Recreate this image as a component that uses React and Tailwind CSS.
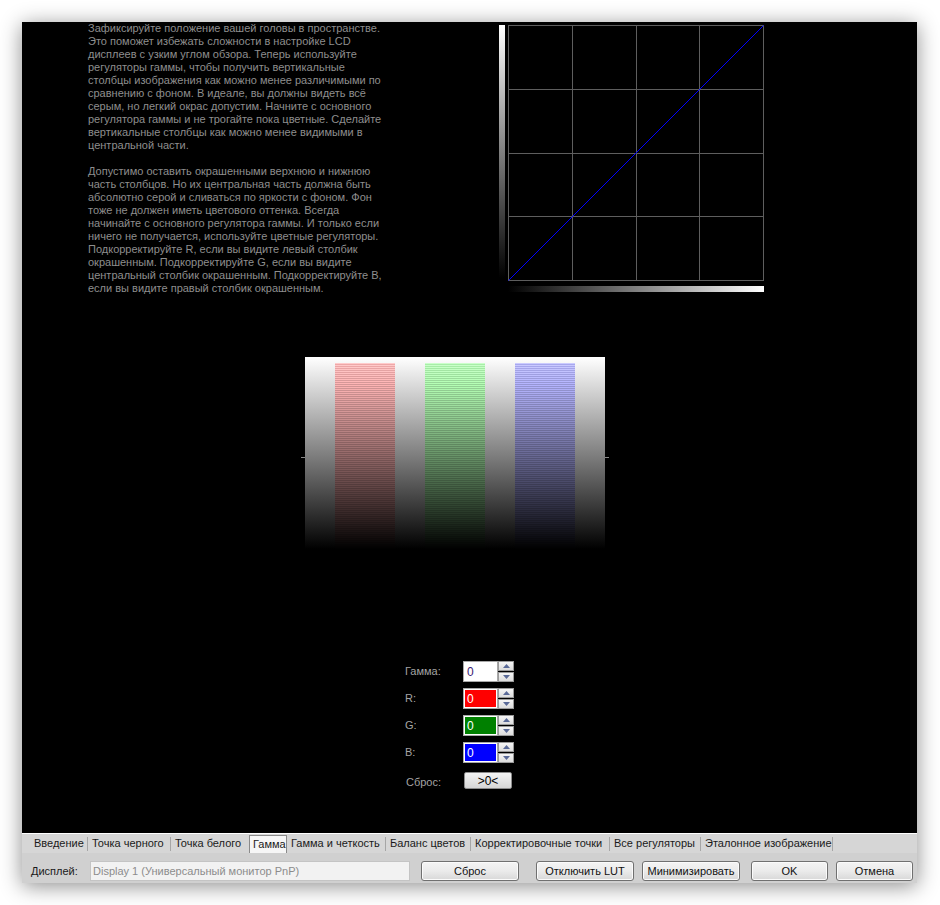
import React from "react";

const para1 = [
  "Зафиксируйте положение вашей головы в пространстве.",
  "Это поможет избежать сложности в настройке LCD",
  "дисплеев с узким углом обзора. Теперь используйте",
  "регуляторы гаммы, чтобы получить вертикальные",
  "столбцы изображения как можно менее различимыми по",
  "сравнению с фоном. В идеале, вы должны видеть всё",
  "серым, но легкий окрас допустим. Начните с основного",
  "регулятора гаммы и не трогайте пока цветные. Сделайте",
  "вертикальные столбцы как можно менее видимыми в",
  "центральной части.",
];
const para2 = [
  "Допустимо оставить окрашенными верхнюю и нижнюю",
  "часть столбцов. Но их центральная часть должна быть",
  "абсолютно серой и сливаться по яркости с фоном. Фон",
  "тоже не должен иметь цветового оттенка. Всегда",
  "начинайте с основного регулятора гаммы. И только если",
  "ничего не получается, используйте цветные регуляторы.",
  "Подкорректируйте R, если вы видите левый столбик",
  "окрашенным. Подкорректируйте G, если вы видите",
  "центральный столбик окрашенным. Подкорректируйте B,",
  "если вы видите правый столбик окрашенным.",
];

function Graph() {
  const lines = [0, 63.75, 127.5, 191.25, 255];
  return (
    <svg width="266" height="268" className="block">
      <defs>
        <linearGradient id="vbar" x1="0" y1="0" x2="0" y2="1">
          <stop offset="0" stopColor="#ffffff" />
          <stop offset="1" stopColor="#000000" />
        </linearGradient>
        <linearGradient id="hbar" x1="0" y1="0" x2="1" y2="0">
          <stop offset="0" stopColor="#000000" />
          <stop offset="1" stopColor="#ffffff" />
        </linearGradient>
      </defs>
      <rect x="0" y="0" width="6" height="253" fill="url(#vbar)" />
      <rect x="9" y="261" width="256" height="6" fill="url(#hbar)" />
      {lines.map((l, i) => (
        <line key={"v" + i} x1={9.5 + Math.round(l)} y1="0" x2={9.5 + Math.round(l)} y2="255.5" stroke="#5e5e5e" strokeWidth="1" />
      ))}
      {lines.map((l, i) => (
        <line key={"h" + i} x1="9" y1={0.5 + Math.round(l)} x2="265" y2={0.5 + Math.round(l)} stroke="#5e5e5e" strokeWidth="1" />
      ))}
      <line x1="9.5" y1="255.5" x2="264.5" y2="0.5" stroke="#0000ff" strokeWidth="1" />
    </svg>
  );
}

const clamp = (v) => Math.max(0, Math.min(255, Math.round(v)));
const gray = (y) => (y < 100 ? 255 - (131 * y) / 100 : Math.max(0, 124 * (1 - (y - 100) / 92)));

function rowColor(ch, y, odd) {
  const g = gray(y);
  const k = odd ? 1.08 : 0.9;
  const main = (g * 1.04 + 8 * (g / 255)) * k;
  const other = g * 0.76 * k;
  const c = [other, other, other];
  c[ch] = main;
  return `rgb(${clamp(c[0])},${clamp(c[1])},${clamp(c[2])})`;
}

function Column({ x, ch }) {
  const rows = [];
  for (let y = 6; y < 193; y++) {
    rows.push(<rect key={y} x={x} y={y} width="60" height="1" fill={rowColor(ch, y, y % 2 === 0)} />);
  }
  return <g shapeRendering="crispEdges">{rows}</g>;
}

function Pattern() {
  return (
    <svg width="308" height="200" className="block">
      <defs>
        <linearGradient id="bgg" x1="0" y1="0" x2="0" y2="1">
          <stop offset="0" stopColor="#ffffff" />
          <stop offset="0.5" stopColor="#7c7c7c" />
          <stop offset="0.96" stopColor="#000000" />
          <stop offset="1" stopColor="#000000" />
        </linearGradient>
      </defs>
      <rect x="4" y="0" width="300" height="200" fill="url(#bgg)" />
      <rect x="0" y="100" width="4" height="1" fill="#8a8a8a" />
      <rect x="304" y="100" width="4" height="1" fill="#8a8a8a" />
      <Column x={34} ch={0} />
      <Column x={124} ch={1} />
      <Column x={214} ch={2} />
    </svg>
  );
}

function Arrow({ up }) {
  return (
    <svg width="7" height="4" className="block">
      <polygon points={up ? "0,4 7,4 3.5,0" : "0,0 7,0 3.5,4"} fill="#5a6a98" />
    </svg>
  );
}

function Spin({ fill, textColor }) {
  return (
    <div className="flex h-[21px]">
      <div className="w-[35px] h-[21px] border border-[#a8a8a8] bg-white p-px">
        <div className={`w-full h-full ${fill} flex items-center pl-[2px] text-[12px] leading-none ${textColor}`}>0</div>
      </div>
      <div className="w-[16px] h-[21px] flex flex-col">
        <div className="h-[10px] border border-[#9a9a9a] bg-linear-to-b from-[#f6f6f6] to-[#dcdcdc] flex items-center justify-center">
          <Arrow up />
        </div>
        <div className="h-px bg-black" />
        <div className="h-[10px] border border-[#9a9a9a] bg-linear-to-b from-[#f6f6f6] to-[#dcdcdc] flex items-center justify-center">
          <Arrow />
        </div>
      </div>
    </div>
  );
}

function Btn({ w, children, ml }) {
  return (
    <div
      className={`${w} ${ml} h-[20px] border border-[#707070] rounded-[3px] bg-linear-to-b from-[#f4f4f4] via-[#ebebeb] to-[#d8d8d8] flex items-center justify-center text-[11px] text-[#111] shadow-[inset_0_0_0_1px_#fbfbfb]`}
    >
      {children}
    </div>
  );
}

const tabs = [
  { t: "Введение", w: "w-[58px]" },
  { t: "Точка черного", w: "w-[83px]" },
  { t: "Точка белого", w: "w-[78px]", nosep: true },
  { t: "Гамма", w: "w-[38px]", active: true },
  { t: "Гамма и четкость", w: "w-[99px]" },
  { t: "Баланс цветов", w: "w-[85px]" },
  { t: "Корректировочные точки", w: "w-[139px]" },
  { t: "Все регуляторы", w: "w-[91px]" },
  { t: "Эталонное изображение", w: "w-[132px]" },
];

export default function App() {
  return (
    <div className="w-[940px] h-[905px] bg-white pt-[22px] pl-[22px] font-['Liberation_Sans',sans-serif] text-[11px]">
      <div className="w-[895px] h-[861px] flex flex-col shadow-[0_3px_20px_rgba(0,0,0,0.45)]">
        <div className="h-[811px] bg-black flex flex-col">
          <div className="flex items-start">
            <div className="ml-[66px] w-[300px] text-[11px] leading-[13px] text-[#8e8e8e] whitespace-nowrap">
              {para1.map((l, i) => (
                <div key={i}>{l}</div>
              ))}
              <div className="h-[13px]" />
              {para2.map((l, i) => (
                <div key={i}>{l}</div>
              ))}
            </div>
            <div className="ml-[111px] mt-[3px]">
              <Graph />
            </div>
          </div>
          <div className="ml-[279px] mt-[62px]">
            <Pattern />
          </div>
          <div className="ml-[383px] mt-[104px] flex flex-col text-[11px] text-[#a4a4a4]">
            {[
              ["Гамма:", "bg-white", "text-[#3a2070]"],
              ["R:", "bg-[#ff0000]", "text-white"],
              ["G:", "bg-[#008000]", "text-white"],
              ["B:", "bg-[#0000ff]", "text-white"],
            ].map(([l, f, tc], i) => (
              <div key={i} className="flex items-center h-[21px] mb-[6px]">
                <div className="w-[58px]">{l}</div>
                <Spin fill={f} textColor={tc} />
              </div>
            ))}
            <div className="flex items-center mt-[2px]">
              <div className="w-[59px] pt-[3px] pl-px">Сброс:</div>
              <div className="w-[48px] h-[17px] border border-[#8c8c8c] rounded-[2px] bg-linear-to-b from-[#f4f4f4] to-[#d6d6d6] flex items-center justify-center text-[12px] text-black">
                &gt;0&lt;
              </div>
            </div>
          </div>
        </div>
        <div className="h-[20px] bg-[#d6d6d6] border-t border-white flex items-end text-[11px] text-[#1a1a1a]">
          <div className="w-[8px]" />
          {tabs.map((tb, i) =>
            tb.active ? (
              <div
                key={i}
                className={`${tb.w} h-[18px] bg-[#f6f6f6] border border-b-0 border-[#8a8a8a] flex items-center pl-[3px] whitespace-nowrap`}
              >
                {tb.t}
              </div>
            ) : (
              <div key={i} className={`${tb.w} h-[19px] flex items-center justify-between`}>
                <span className="pl-[4px] whitespace-nowrap">{tb.t}</span>
                {!tb.nosep && <span className="w-px h-[14px] bg-[#a6a6a6] shrink-0" />}
              </div>
            )
          )}
        </div>
        <div className="h-[30px] bg-[#d0d0d0] flex items-start pt-[8px] text-[11px]">
          <div className="ml-[9px] w-[59px] text-[#1a1a1a] leading-[20px]">Дисплей:</div>
          <div className="w-[320px] h-[20px] border border-[#c4c4c4] bg-[#f2f2f2] text-[#8c8c8c] flex items-center pl-[2px]">
            Display 1 (Универсальный монитор PnP)
          </div>
          <Btn w="w-[98px]" ml="ml-[11px]">Сброс</Btn>
          <Btn w="w-[98px]" ml="ml-[17px]">Отключить LUT</Btn>
          <Btn w="w-[98px]" ml="ml-[8px]">Минимизировать</Btn>
          <Btn w="w-[77px]" ml="ml-[11px]">OK</Btn>
          <Btn w="w-[77px]" ml="ml-[8px]">Отмена</Btn>
        </div>
      </div>
    </div>
  );
}
